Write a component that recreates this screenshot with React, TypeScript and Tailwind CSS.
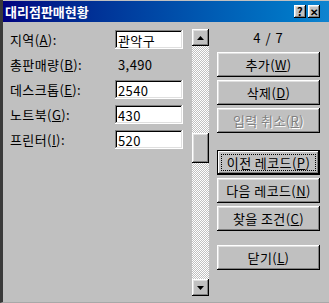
import React from "react";

const raised =
  "shadow-[inset_-1px_-1px_#000,inset_1px_1px_#fff,inset_-2px_-2px_#808080,inset_2px_2px_#dfdfdf]";
const focused =
  "shadow-[inset_-2px_-2px_#000,inset_1px_1px_#000,inset_2px_2px_#fff,inset_-3px_-3px_#808080]";
const sunken =
  "shadow-[inset_-1px_-1px_#fff,inset_1px_1px_#808080,inset_-2px_-2px_#dfdfdf,inset_2px_2px_#000]";

const fields = [
  { label: "지역", key: "A", value: "관악구", input: true },
  { label: "총판매량", key: "B", value: "3,490", input: false },
  { label: "데스크톱", key: "E", value: "2540", input: true },
  { label: "노트북", key: "G", value: "430", input: true },
  { label: "프린터", key: "I", value: "520", input: true },
];

const buttons = [
  { label: "추가", key: "W" },
  { label: "삭제", key: "D" },
  { label: "입력 취소", key: "R", disabled: true },
  { label: "이전 레코드", key: "P", focus: true, gap: "mt-[17px]" },
  { label: "다음 레코드", key: "N" },
  { label: "찾을 조건", key: "C" },
  { label: "닫기", key: "L", gap: "mt-[14px]" },
];

function Arrow({ up }: { up?: boolean }) {
  return (
    <div className={`w-[17px] h-[17px] bg-[#c0c0c0] flex items-center justify-center ${raised}`}>
      <svg width="7" height="4" viewBox="0 0 7 4">
        <polygon points={up ? "3.5,0 7,4 0,4" : "0,0 7,0 3.5,4"} fill="#000" />
      </svg>
    </div>
  );
}

export default function App() {
  return (
    <div className="w-[329px] h-[303px] bg-[#c0c0c0] border-l-[3px] border-l-[#3a3a3a] border-b border-b-[#a8a8a8] flex flex-col font-['Noto_Sans_CJK_KR','Noto_Sans',sans-serif] text-[13px] text-black leading-none tracking-[0.4px]">
      <div className="h-[21px] mt-[1px] flex items-center pl-[2px] pr-[9px] bg-gradient-to-r from-[#000080] to-[#1084d0]">
        <span className="flex-1 text-white font-bold tracking-[0px]">대리점판매현황</span>
        <div className="flex gap-[2px]">
          <div className={`w-[12px] h-[13px] bg-[#c0c0c0] flex items-center justify-center text-[11px] font-bold ${raised}`}>?</div>
          <div className={`w-[12px] h-[13px] bg-[#c0c0c0] flex items-center justify-center text-[10px] font-bold ${raised}`}>✕</div>
        </div>
      </div>

      <div className="flex flex-1 pt-[5px]">
        <div className="w-[189px] pl-[7px] flex flex-col">
          {fields.map((f) => (
            <div key={f.key} className="h-[25px] flex items-center">
              <span className="w-[105px]">
                {f.label}(<u>{f.key}</u>):
              </span>
              {f.input ? (
                <div className={`w-[68px] h-[19px] bg-white flex items-center pl-[3px] pt-[1px] ${sunken}`}>
                  {f.value}
                </div>
              ) : (
                <span className="pl-[3px]">{f.value}</span>
              )}
            </div>
          ))}
        </div>

        <div className="mt-[2px] w-[17px] h-[267px] flex flex-col">
          <Arrow up />
          <div className="flex-1 bg-[image:repeating-conic-gradient(#c0c0c0_0%_25%,#ffffff_0%_50%)] bg-[length:2px_2px]">
            <div className={`mt-[87px] w-[17px] h-[30px] bg-[#c0c0c0] ${raised}`} />
          </div>
          <Arrow />
        </div>

        <div className="ml-[8px] w-[103px] flex flex-col">
          <div className="h-[22px] pt-[4px] text-center tracking-[1px]">4 / 7</div>
          {buttons.map((b) => (
            <div
              key={b.key}
              className={`h-[25px] mt-[3px] flex bg-[#c0c0c0] ${b.gap ?? ""} ${
                b.focus ? "p-[4px] " + focused : "items-center justify-center " + raised
              }`}
            >
              {b.focus ? (
                <span className="flex-1 flex items-center justify-center border border-dotted border-black">
                  {b.label}(<u>{b.key}</u>)
                </span>
              ) : b.disabled ? (
                <span className="text-[#808080] [text-shadow:1px_1px_0_#fff]">
                  {b.label}(<u>{b.key}</u>)
                </span>
              ) : (
                <span>
                  {b.label}(<u>{b.key}</u>)
                </span>
              )}
            </div>
          ))}
        </div>
      </div>
    </div>
  );
}
